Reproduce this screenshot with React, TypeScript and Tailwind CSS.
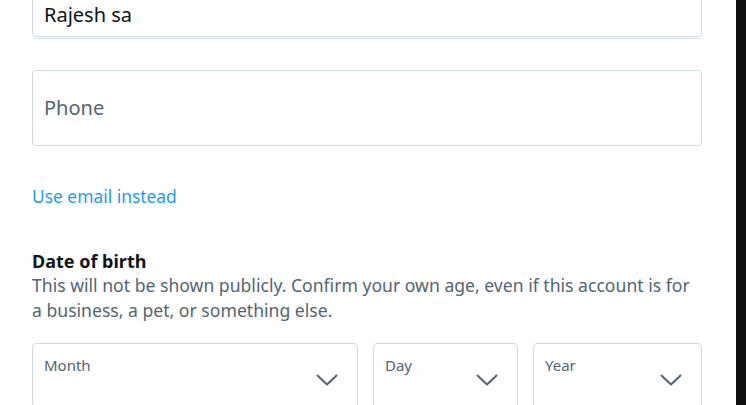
export default function App() {
  return (
    <div
      className="flex h-[405px] w-[746px] overflow-hidden bg-white text-[#0f1419]"
      style={{ fontFamily: '"Noto Sans", "Open Sans", sans-serif' }}
    >
      <div className="flex-1 pl-8 pr-[34px]">
        {/* Name field (scrolled partly out of view) */}
        <div className="mt-[-39px] flex h-[76px] flex-col justify-end rounded border border-[#cfd9de] px-[11px] pb-[9px]">
          <div className="text-[20px] leading-[24px]">Rajesh sa</div>
        </div>
        <div className="mx-[2px] mt-px h-px bg-[#d3e3f0]" />

        {/* Phone field */}
        <div className="mt-[31px] flex h-[76px] items-center rounded border border-[#cfd9de] px-[11px]">
          <span className="text-[20px] leading-[24px] text-[#536471]">Phone</span>
        </div>

        <div className="mt-[38px] text-[17.4px] leading-[24px] text-[#1d9bf0]">Use email instead</div>

        <div className="mt-[41px] text-[18px] font-bold leading-[24px]">Date of birth</div>
        <p className="text-[17.6px] leading-[25px] text-[#536471]">
          This will not be shown publicly. Confirm your own age, even if this account is for a
          business, a pet, or something else.
        </p>

        <div className="mt-5 flex gap-[15px]">
          <Select label="Month" className="w-[326px]" />
          <Select label="Day" className="w-[145px]" />
          <Select label="Year" className="flex-1" />
        </div>
      </div>
      <div className="w-[10px] bg-[#111111]" />
    </div>
  );
}

function Select({ label, className }: { label: string; className: string }) {
  return (
    <div className={`relative h-[64px] rounded border border-[#cfd9de] px-[11px] pt-[11px] ${className}`}>
      <div className="text-[15px] leading-[20px] text-[#536471]">{label}</div>
      <svg
        className="absolute right-[19px] top-[30px]"
        width="22"
        height="12"
        viewBox="0 0 22 12"
        fill="none"
        stroke="#536471"
        strokeWidth="2"
        strokeLinecap="round"
        strokeLinejoin="round"
      >
        <path d="M1.5 1.5 L11 10.5 L20.5 1.5" />
      </svg>
    </div>
  );
}
